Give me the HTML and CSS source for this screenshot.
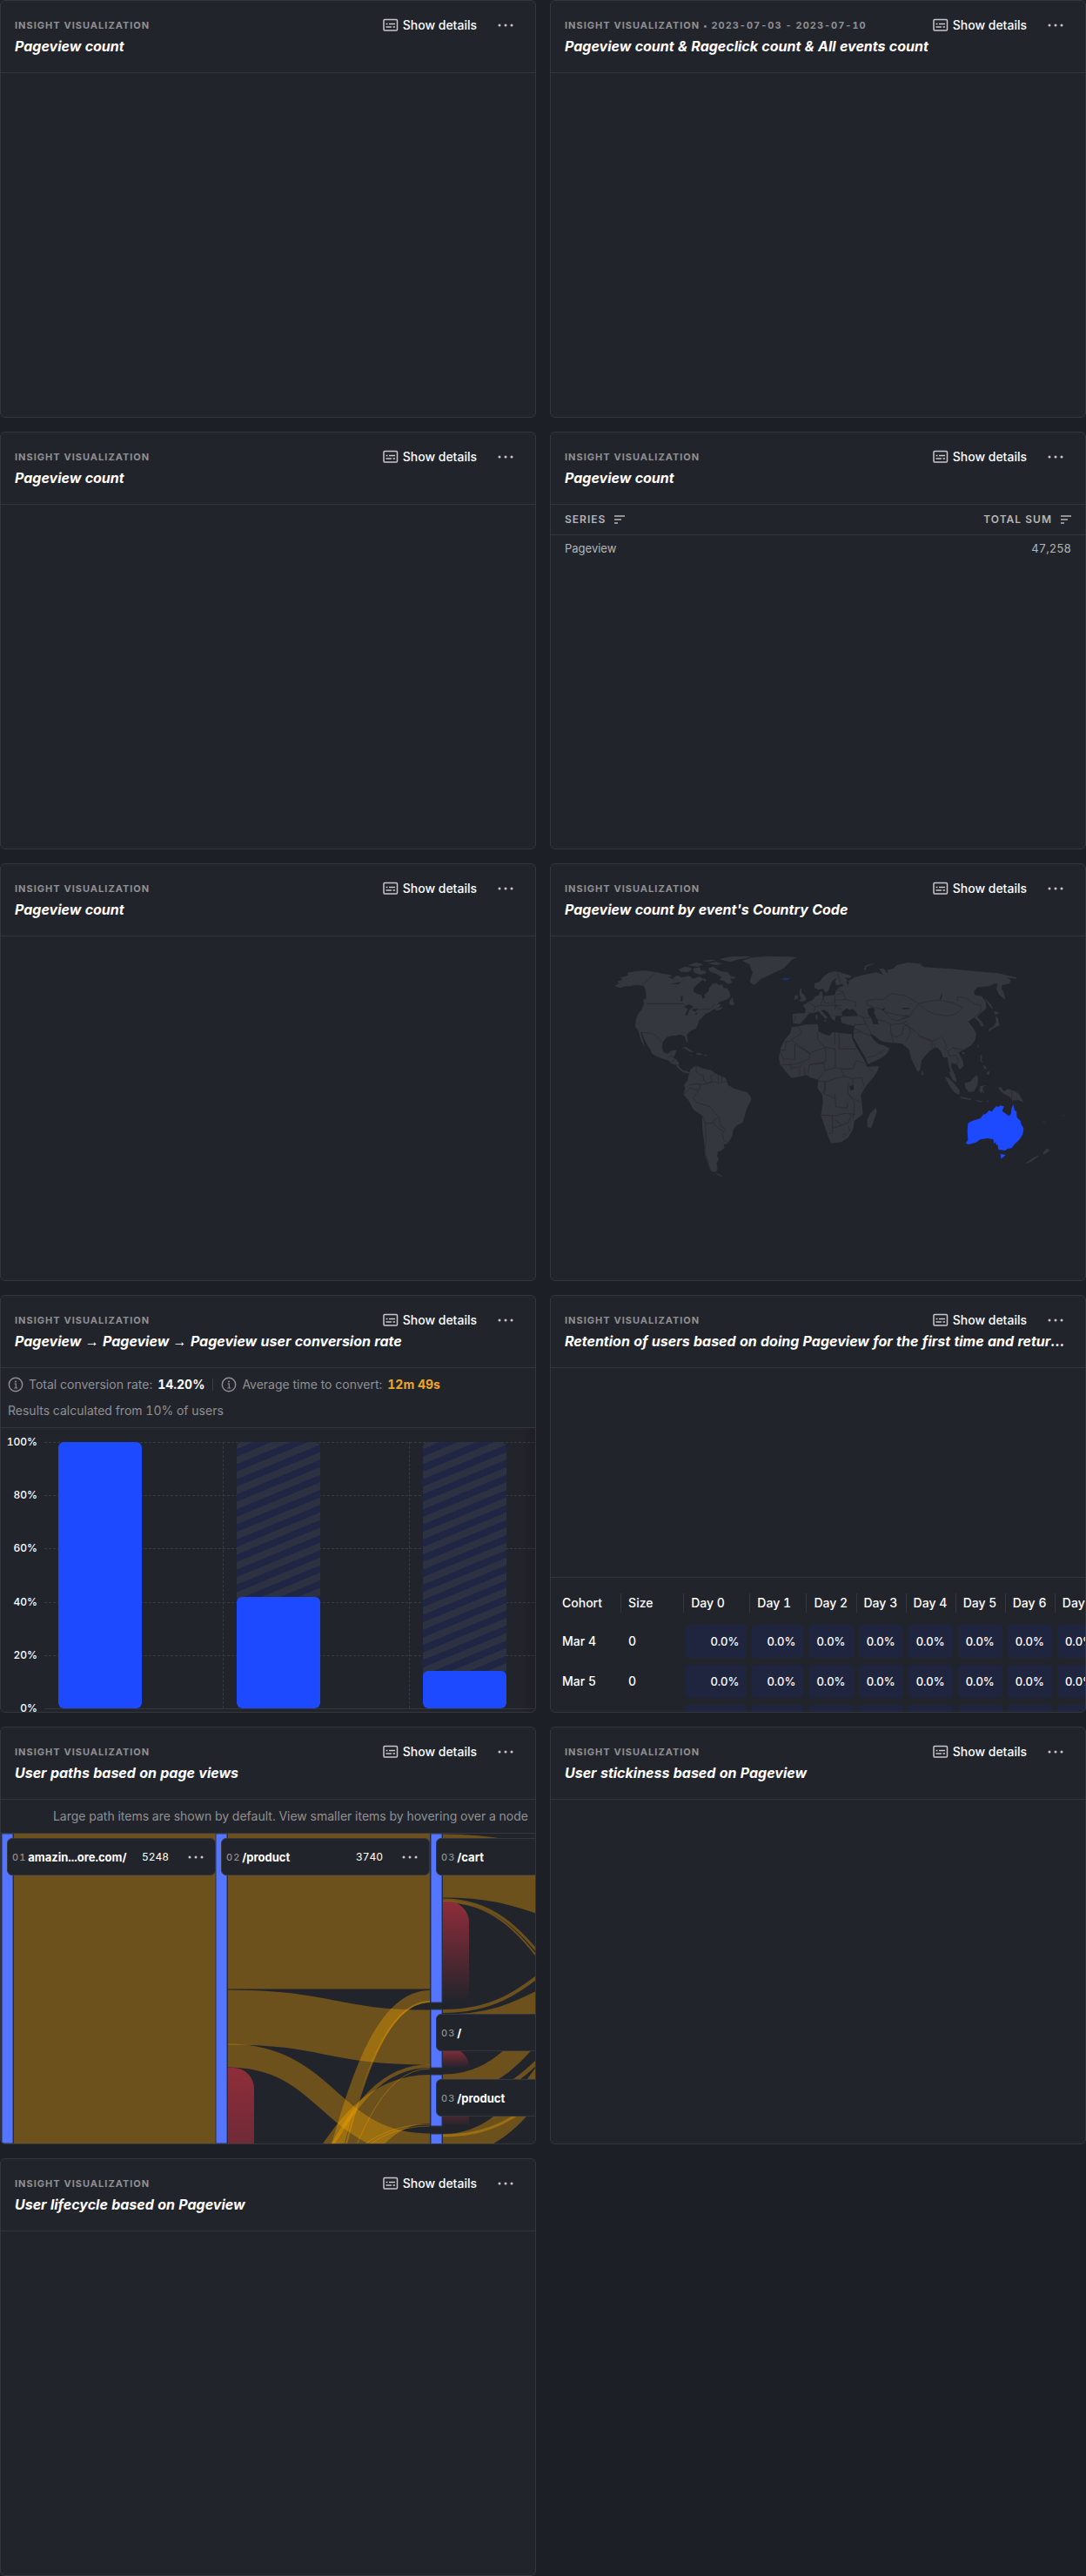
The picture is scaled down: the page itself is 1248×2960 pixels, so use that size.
FILE: index.html
```html
<!DOCTYPE html>
<html lang="en">
<head>
<meta charset="utf-8">
<meta name="viewport" content="width=device-width, initial-scale=1">
<title>Insight cards</title>
<link rel="stylesheet" href="styles.css">
</head>
<body>
<svg class="defs" aria-hidden="true">
  <symbol id="icon-details" viewBox="0 0 18 16"><rect x="1" y="1.5" width="15.5" height="12.5" rx="1" fill="none" stroke="currentColor" stroke-width="1.5"/><path d="M3.5 6.5h2M7 6.5h7M3.5 10h6.500M11.500 10h2.500" stroke="currentColor" stroke-width="1.500"/></symbol>
  <symbol id="icon-more" viewBox="0 0 18 4"><circle cx="2" cy="2" r="1.500" fill="currentColor"/><circle cx="9" cy="2" r="1.500" fill="currentColor"/><circle cx="16" cy="2" r="1.500" fill="currentColor"/></symbol>
  <symbol id="icon-sort" viewBox="0 0 12 10"><path d="M0 1h12M0 5h8M0 9h4" stroke="currentColor" stroke-width="1.500"/></symbol>
  <symbol id="icon-info" viewBox="0 0 18 18"><circle cx="9" cy="9" r="7.700" fill="none" stroke="currentColor" stroke-width="1.400"/><path d="M7.500 8h1.800v5M7.200 13h4" fill="none" stroke="currentColor" stroke-width="1.200"/><circle cx="9" cy="5.500" r="1" fill="currentColor"/></symbol>
</svg>
<main class="grid">

<article class="card">
  <header class="head"><div class="top"><h5 class="kind">Insight visualization</h5><button class="details"><svg><use href="#icon-details"/></svg>Show details</button><button class="more" aria-label="More"><svg><use href="#icon-more"/></svg></button></div><h4 class="title">Pageview count</h4></header>
</article>

<article class="card">
  <header class="head"><div class="top"><h5 class="kind">Insight visualization <span class="dot">•</span> 2023-07-03 - 2023-07-10</h5><button class="details"><svg><use href="#icon-details"/></svg>Show details</button><button class="more" aria-label="More"><svg><use href="#icon-more"/></svg></button></div><h4 class="title">Pageview count &amp; Rageclick count &amp; All events count</h4></header>
</article>

<article class="card">
  <header class="head"><div class="top"><h5 class="kind">Insight visualization</h5><button class="details"><svg><use href="#icon-details"/></svg>Show details</button><button class="more" aria-label="More"><svg><use href="#icon-more"/></svg></button></div><h4 class="title">Pageview count</h4></header>
</article>

<article class="card">
  <header class="head"><div class="top"><h5 class="kind">Insight visualization</h5><button class="details"><svg><use href="#icon-details"/></svg>Show details</button><button class="more" aria-label="More"><svg><use href="#icon-more"/></svg></button></div><h4 class="title">Pageview count</h4></header>
  <table class="series">
    <thead><tr><th>Series<svg><use href="#icon-sort"/></svg></th><th>Total sum<svg><use href="#icon-sort"/></svg></th></tr></thead>
    <tbody><tr><td>Pageview</td><td>47,258</td></tr></tbody>
  </table>
</article>

<article class="card">
  <header class="head"><div class="top"><h5 class="kind">Insight visualization</h5><button class="details"><svg><use href="#icon-details"/></svg>Show details</button><button class="more" aria-label="More"><svg><use href="#icon-more"/></svg></button></div><h4 class="title">Pageview count</h4></header>
</article>

<article class="card">
  <header class="head"><div class="top"><h5 class="kind">Insight visualization</h5><button class="details"><svg><use href="#icon-details"/></svg>Show details</button><button class="more" aria-label="More"><svg><use href="#icon-more"/></svg></button></div><h4 class="title">Pageview count by event's Country Code</h4></header>
  <svg class="map" viewBox="-141 -12 1842 1185" role="img" aria-label="World map">
    <g class="land">
      <path d="M78 158L95 150 88 144 108 136 98 131 125 122 122 114 150 108 185 106 222 111 250 118 270 120 280 128 295 122 310 130 335 124 350 134 372 126 385 136 370 148 352 165 350 178 362 186 378 190 382 205 390 198 388 188 402 178 405 165 415 152 428 148 440 156 450 154 455 166 468 168 474 178 478 192 470 203 445 212 432 222 445 222 440 232 420 240 405 250 392 255 380 268 370 278 366 292 360 305 345 312 333 320 328 328 332 354 326 350 320 332 305 326 290 330 275 330 258 336 246 350 242 370 248 388 262 393 275 382 292 380 288 395 280 405 292 412 300 424 302 438 315 450 330 452 338 460 328 460 315 457 300 445 290 432 275 425 262 415 245 410 225 402 208 392 202 378 190 360 180 340 172 318 168 318 178 350 182 368 172 352 165 330 160 312 150 300 152 275 160 255 172 240 180 222 178 208 188 200 186 175 180 160 165 156 150 155 135 160 115 160 98 166Z"/>
      <path d="M298 103L320 92 340 95 345 103 330 112 310 110ZM350 98L372 94 376 104 395 108 392 116 372 120 352 112ZM400 98L418 92 430 100 445 108 470 112 480 125 498 128 488 135 478 132 484 148 470 152 456 142 440 138 448 128 430 118 410 110ZM330 88L360 78 385 84 366 92ZM400 80L430 76 450 82 430 88ZM440 66L480 58 550 56 530 64 500 68 480 76 460 72ZM380 72L410 68 430 70 400 76ZM382 132L398 138 388 144ZM475 210L486 198 488 212 492 220 488 226 474 222ZM425 238L440 234 452 230 446 240 430 244Z"/>
      <path d="M520 72L545 62 600 56 680 58 708 60 690 68 675 85 660 100 640 108 620 118 598 128 582 135 565 152 555 154 545 145 550 125 555 112 548 98 545 85 530 78Z"/>
      <path d="M308 372L325 370 345 382 352 386 340 386 322 375ZM358 390L372 390 384 396 366 397ZM388 397L398 397 398 400 388 400ZM338 396L348 397 340 399Z"/>
      <path d="M340 448L355 436 365 436 385 444 410 448 430 462 450 472 462 476 470 500 490 512 515 520 535 525 548 540 550 552 535 580 528 605 520 630 500 640 488 655 485 675 475 692 468 702 455 705 458 715 448 726 435 730 432 745 438 755 430 770 434 790 428 800 410 798 400 770 390 740 388 700 382 660 380 605 350 585 335 555 316 532 322 512 318 500 330 485 335 465ZM425 802L438 807 454 817 440 814Z"/>
      <path d="M690 300L712 298 740 292 778 290 782 302 780 314 800 325 820 330 830 318 855 320 880 324 895 324 900 345 915 375 938 412 950 438 990 435 985 452 970 475 945 505 928 535 935 600 905 625 902 650 885 680 860 697 825 701 812 670 790 605 797 560 795 535 778 510 782 482 755 475 740 466 715 472 690 476 670 455 650 430 645 408 650 375 665 345 685 320Z"/>
      <path d="M980 578L983 592 964 648 950 645 950 620 960 598Z"/>
      <path d="M692 255L735 252 738 240 728 226 745 215 765 205 770 195 784 190 786 178 796 180 796 194 815 192 838 190 842 176 850 164 870 158 862 152 843 157 838 142 846 130 830 140 822 158 816 176 806 182 796 168 780 172 768 166 768 150 785 145 800 125 815 115 835 109 850 110 875 118 896 124 890 132 872 130 885 142 905 130 930 122 950 118 980 112 1005 120 990 98 1008 100 1022 118 1018 104 1040 98 1050 88 1090 78 1130 82 1145 94 1170 95 1240 100 1320 108 1400 115 1440 124 1466 130 1462 134 1430 130 1445 138 1440 150 1415 156 1412 168 1422 185 1426 206 1405 190 1395 170 1400 152 1390 150 1370 160 1330 163 1318 176 1320 190 1345 194 1358 212 1360 236 1345 250 1328 266 1345 282 1352 298 1342 298 1335 282 1318 268 1298 282 1316 304 1326 325 1322 345 1308 364 1280 380 1265 388 1278 412 1282 435 1268 448 1262 432 1250 428 1240 422 1240 440 1252 465 1258 490 1250 485 1236 450 1230 430 1226 405 1212 406 1204 384 1190 370 1172 378 1150 398 1138 415 1132 448 1124 456 1114 436 1102 410 1094 378 1070 358 1040 355 1005 352 990 346 970 330 960 325 972 344 990 360 1005 362 1028 374 1015 395 990 412 952 428 945 408 925 375 902 335 905 296 880 292 862 286 858 268 870 262 842 262 838 280 828 272 815 250 800 240 792 244 812 266 808 274 792 258 782 246 765 252 748 254 738 268 718 290 694 288Z"/>
      <path d="M718 170L724 168 722 180 734 192 740 206 730 212 714 210 722 202 716 190ZM700 192L712 190 710 204 698 206ZM772 258L778 258 778 276 773 274ZM800 276L808 276 806 284ZM937 102L945 88 975 80 970 84 948 92 944 104Z"/>
      <path d="M1355 200L1375 222 1385 240 1378 236 1362 214ZM1386 246L1400 248 1404 254 1390 258ZM1392 264L1400 268 1406 295 1386 304 1370 316 1368 308 1385 298 1394 284ZM1330 360L1334 362 1333 374 1330 370ZM1275 388L1286 388 1282 396ZM1340 396L1346 400 1344 416 1352 424 1340 418ZM1362 455L1370 452 1372 464 1362 464ZM1350 432L1358 436 1362 446 1352 444ZM1138 450L1145 462 1140 468 1136 460ZM1216 470L1232 478 1252 498 1268 518 1268 534 1250 526 1232 500ZM1230 452L1246 462 1258 482 1256 490 1244 482ZM1268 540L1290 544 1312 548 1306 552 1275 547ZM1286 494L1305 488 1325 466 1332 474 1330 500 1318 522 1300 524 1288 510ZM1340 504L1365 500 1350 506 1348 514 1354 532 1346 522 1342 530 1336 520ZM1400 508L1412 508 1420 522 1435 514 1455 520 1472 530 1482 548 1490 560 1470 552 1450 554 1440 540 1420 530 1408 520ZM1320 552L1350 556 1340 560ZM1360 556L1372 552 1362 560ZM1497 768L1520 752 1542 742 1536 750 1515 764 1500 771ZM1556 735L1566 720 1580 722 1572 732 1558 740ZM1553 622L1564 630 1562 632ZM1624 604L1630 604 1626 608Z"/>
    </g>
    <g class="water">
      <path d="M862 250L878 236 890 242 900 238 912 250 918 262 880 264 864 262ZM950 240L965 232 978 240 972 250 985 275 988 290 970 290 964 270 954 258ZM1001 238L1014 234 1006 244ZM1070 234L1095 234 1094 238 1072 239ZM1200 205L1206 184 1208 194 1203 206ZM888 505L902 500 904 515 893 520ZM262 128L290 124 280 134ZM265 154L308 145 300 152ZM308 192L314 196 312 212 306 210ZM318 230L335 222 352 232 340 236 328 262 322 258 332 238ZM342 240L366 236 358 248ZM350 258L366 250 362 256ZM960 325L975 345 1005 352 992 346 975 330ZM878 140L888 146 882 155Z"/>
    </g>
    <g class="borders">
      <path d="M222 111L172 160 186 178M188 220H315L325 226M366 240L410 238 425 222M172 318L205 322 222 330 235 346 242 352M262 405L276 398 280 405M275 420L290 412M290 432L302 430M360 438V455L372 465 385 466 385 480 395 494M335 500L370 495 375 510 350 545 360 560 378 565M318 530L340 510 365 518M395 494L415 488 410 470 425 462M420 488L440 494 465 488M436 470V490M448 472V490M370 500L400 495 420 488M378 565L408 575 420 590 440 612 420 622 415 632 392 632 380 605M392 632L394 690 390 730 405 780 412 798M440 614L442 638 462 655 450 668 455 690 470 700M418 632L435 648 455 660M712 300L725 320 688 345 752 390 805 370 780 345 778 318M665 350H685M700 360V412L660 410 648 380H668L670 350M700 360L752 392 750 410 705 428 680 430M805 370L808 420 750 430 745 462M655 430H685L690 450M716 445V470M734 440V470M690 440L715 440 730 425M752 430L800 425 805 450 780 480M805 450L840 440M838 318V360M853 320V376H912M840 376V440L860 445 900 445 910 420M840 376L805 370M908 415L938 425 970 455M860 445L870 470 840 478 805 490 800 530 838 545M870 470L900 478 930 475 940 505M885 490L882 530 900 545 925 560M900 478V500M838 530L842 575 880 580 882 560M792 604L845 606M830 606V665L818 668M840 620L860 640 830 650M845 606L870 598 895 600M860 640L885 630 895 600M885 530L905 560V585L900 615M782 488H805V520L795 528M864 672L872 668 876 674 870 680 864 676M895 600L908 602M885 640L890 660"/>
      <path d="M702 262L698 284M745 250L768 255M748 215L770 230 765 250M770 230L795 225 810 228M796 195L805 218 830 220 838 212V192M810 228L840 225 838 240M800 195L790 222M842 190L868 182 875 205 838 208M875 205L912 215 908 232M838 208L842 232 862 240M840 226L860 226M846 112L858 150M858 160L845 172 868 180M858 270L838 262M908 290L905 305 930 318 965 332M935 268L945 290 930 292 905 292M945 290L958 310 965 328M918 260L945 270 962 266M1008 202L1035 185 1080 192 1128 220 1110 240 1100 260 1070 262 1040 255 1015 250 1000 240 950 225 946 210 975 204 1008 205M1128 220L1160 212 1200 208 1245 216 1280 234 1252 258 1222 262 1180 256 1150 240ZM1260 210L1262 196 1290 200 1320 222 1342 225 1340 250 1320 266M984 275L1010 280 1030 292 1072 288 1085 280M1010 250L1030 270 1050 280 1072 272 1098 264M1030 292L1032 325 1050 335 1070 325 1075 300 1090 290M1032 325L1040 352M1072 288L1095 300 1100 320 1082 350M1095 300L1120 320 1140 335 1168 345 1175 350 1205 335 1215 348 1225 370M1125 330L1170 350M1172 350V372L1185 375 1180 355M1215 370L1228 385 1245 372 1262 375 1280 380M1228 385L1232 400 1256 398 1265 420M1250 428L1265 425M1245 372L1268 392 1275 415M950 405L975 400 992 390 1012 375M1448 517V552M905 322L930 315M1070 272L1090 265 1075 262"/>
    </g>
    <path class="iceland" d="M658 132L672 132 685 130 680 136 668 140 658 137Z"/>
    <path class="country-top" d="M1297 632L1310 625 1340 615 1350 602 1358 600 1370 588 1380 592 1384 584 1395 573 1402 576 1408 571 1421 574 1415 590 1438 607 1445 600 1448 580 1453 567 1458 588 1464 590 1466 612 1478 624 1480 634 1489 650 1486 670 1475 688 1458 704 1447 718 1434 720 1425 726 1402 723 1400 708 1392 704 1396 696 1386 702 1385 688 1365 684 1340 688 1325 698 1300 705 1289 701 1297 690 1295 660ZM1409 738L1427 741 1418 750 1411 754Z"/>
  </svg>
</article>

<article class="card">
  <header class="head"><div class="top"><h5 class="kind">Insight visualization</h5><button class="details"><svg><use href="#icon-details"/></svg>Show details</button><button class="more" aria-label="More"><svg><use href="#icon-more"/></svg></button></div><h4 class="title">Pageview <span class="arrow">→</span> Pageview <span class="arrow">→</span> Pageview user conversion rate</h4></header>
  <div class="summary">
    <div class="stats"><span class="stat"><svg><use href="#icon-info"/></svg>Total conversion rate: <b>14.20%</b></span><span class="stat"><svg><use href="#icon-info"/></svg>Average time to convert: <b class="amber">12m 49s</b></span></div>
    <div>Results calculated from 10% of users</div>
  </div>
  <div class="funnel">
    <div class="axis"><span>100%</span><span>80%</span><span>60%</span><span>40%</span><span>20%</span><span>0%</span></div>
    <div class="plot">
      <div class="lines"><i></i><i></i><i></i><i></i><i></i></div>
      <div class="step"><div class="bar"><div class="fill" style="height:100%"></div></div></div>
      <div class="step"><div class="bar"><div class="fill" style="height:41.8%"></div></div></div>
      <div class="step"><div class="bar"><div class="fill" style="height:14.2%"></div></div></div>
    </div>
  </div>
</article>

<article class="card">
  <header class="head"><div class="top"><h5 class="kind">Insight visualization</h5><button class="details"><svg><use href="#icon-details"/></svg>Show details</button><button class="more" aria-label="More"><svg><use href="#icon-more"/></svg></button></div><h4 class="title">Retention of users based on doing Pageview for the first time and returning with the same event</h4></header>
  <div class="graph"></div>
  <div class="cohorts">
    <table class="retention">
      <colgroup><col class="c-label"><col class="c-size"><col class="c-day0"><col class="c-day1"><col><col><col><col><col><col></colgroup>
      <thead><tr><th><span>Cohort</span></th><th><span>Size</span></th><th><span>Day 0</span></th><th><span>Day 1</span></th><th><span>Day 2</span></th><th><span>Day 3</span></th><th><span>Day 4</span></th><th><span>Day 5</span></th><th><span>Day 6</span></th><th><span>Day 7</span></th></tr></thead>
      <tbody>
        <tr><td>Mar 4</td><td>0</td><td><div>0.0%</div></td><td><div>0.0%</div></td><td><div>0.0%</div></td><td><div>0.0%</div></td><td><div>0.0%</div></td><td><div>0.0%</div></td><td><div>0.0%</div></td><td><div>0.0%</div></td></tr>
        <tr><td>Mar 5</td><td>0</td><td><div>0.0%</div></td><td><div>0.0%</div></td><td><div>0.0%</div></td><td><div>0.0%</div></td><td><div>0.0%</div></td><td><div>0.0%</div></td><td><div>0.0%</div></td><td><div>0.0%</div></td></tr>
        <tr><td></td><td></td><td><div></div></td><td><div></div></td><td><div></div></td><td><div></div></td><td><div></div></td><td><div></div></td><td><div></div></td><td><div></div></td></tr>
      </tbody>
    </table>
  </div>
</article>

<article class="card">
  <header class="head"><div class="top"><h5 class="kind">Insight visualization</h5><button class="details"><svg><use href="#icon-details"/></svg>Show details</button><button class="more" aria-label="More"><svg><use href="#icon-more"/></svg></button></div><h4 class="title">User paths based on page views</h4></header>
  <p class="hint">Large path items are shown by default. View smaller items by hovering over a node</p>
  <div class="paths">
    <svg class="sankey" width="740" height="356" viewBox="0 0 740 356">
      <defs><linearGradient id="drop" x1="0" y1="0" x2="0" y2="1"><stop offset="0" stop-color="#8f2d3a"/><stop offset="1" stop-color="#8f2d3a" stop-opacity="0"/></linearGradient></defs>
      <g class="links">
        <path d="M15 178H247" stroke-width="356"/>
        <path d="M261 89H493" stroke-width="179"/>
        <path d="M261 211C377 211 377 234 493 234" stroke-width="63"/>
        <path d="M261 255C377 255 377 358 493 358" stroke-width="27"/>
        <path d="M261 598C377 598 377 187 493 187" stroke-width="14"/>
        <path d="M261 683C377 683 377 193 493 193" stroke-width="2"/>
        <path d="M261 462C377 462 377 267 493 267" stroke-width="4"/>
        <path d="M261 625C377 625 377 270 493 270" stroke-width="1"/>
        <path d="M261 489C377 489 377 305 493 305" stroke-width="56"/>
        <path d="M261 455C377 455 377 334 493 334" stroke-width="1"/>
        <path d="M261 470C377 470 377 336 493 336" stroke-width="1"/>
        <path d="M508 37C624 37 624 75 740 75" stroke-width="73"/>
        <path d="M508 76C624 76 624 212 740 212" stroke-width="3"/>
        <path d="M508 78C624 78 624 224 740 224" stroke-width="2"/>
        <path d="M508 204C624 204 624 113 740 113" stroke-width="4"/>
        <path d="M508 228C624 228 624 171 740 171" stroke-width="41"/>
        <path d="M508 288C624 288 624 138 740 138" stroke-width="23"/>
        <path d="M508 310C624 310 624 200 740 200" stroke-width="5"/>
        <path d="M508 358C624 358 624 198 740 198" stroke-width="26"/>
        <path d="M508 347C624 347 624 252 740 252" stroke-width="3"/>
      </g>
      <g fill="url(#drop)">
        <path d="M261 269h6a24 24 0 0 1 24 24v270h-30z"/>
        <path d="M508 78h6a24 24 0 0 1 24 24v92h-30z"/>
        <path d="M508 247h10a20 22 0 0 1 20 22h-30z"/>
        <path d="M508 303h6a24 24 0 0 1 24 24v9h-30z"/>
      </g>
      <g class="nodes"><path d="M1 0h13v356h-13zM247 0h13v356h-13zM494 0h13v194h-13zM494 202h13v67h-13zM494 277h13v59h-13zM494 345h13v20h-13z"/></g>
    </svg>
    <div class="node n1"><small>01</small><b>amazin...ore.com/</b><span>5248</span><button class="more" aria-label="More"><svg><use href="#icon-more"/></svg></button></div>
    <div class="node n2"><small>02</small><b>/product</b><span>3740</span><button class="more" aria-label="More"><svg><use href="#icon-more"/></svg></button></div>
    <div class="node n3"><small>03</small><b>/cart</b></div>
    <div class="node n4"><small>03</small><b>/</b></div>
    <div class="node n5"><small>03</small><b>/product</b></div>
  </div>
</article>

<article class="card">
  <header class="head"><div class="top"><h5 class="kind">Insight visualization</h5><button class="details"><svg><use href="#icon-details"/></svg>Show details</button><button class="more" aria-label="More"><svg><use href="#icon-more"/></svg></button></div><h4 class="title">User stickiness based on Pageview</h4></header>
</article>

<article class="card">
  <header class="head"><div class="top"><h5 class="kind">Insight visualization</h5><button class="details"><svg><use href="#icon-details"/></svg>Show details</button><button class="more" aria-label="More"><svg><use href="#icon-more"/></svg></button></div><h4 class="title">User lifecycle based on Pageview</h4></header>
</article>

</main>
</body>
</html>
```
FILE: styles.css
```css
* { box-sizing: border-box; }
body { margin: 0; background: #1d1f27; color: #fff; font: 14px/20px Inter, "Liberation Sans", sans-serif; font-variant-numeric: tabular-nums; }
h4, h5, p { margin: 0; }
button { background: none; border: 0; padding: 0; margin: 0; color: inherit; font: inherit; cursor: pointer; }
.defs { display: none; }

.grid { display: grid; grid-template-columns: repeat(auto-fit, minmax(560px, 1fr)); grid-auto-rows: 480px; gap: 16px; }
.card { display: flex; flex-direction: column; min-width: 0; overflow: hidden; background: #22242b; border: 1px solid #35373e; border-radius: 6px; }

.head { flex: none; height: 83px; padding: 16px; border-bottom: 1px solid #35373e; }
.top { display: flex; align-items: center; height: 24px; }
.kind { flex: 1; color: #8f9094; font-size: 11px; line-height: 16px; font-weight: 700; letter-spacing: 1px; text-transform: uppercase; }
.kind .dot { font-size: 9px; }
.details { display: flex; align-items: center; gap: 5px; font-weight: 500; }
.details svg { width: 18px; height: 16px; color: #c8c8ca; }
.more { display: flex; align-items: center; justify-content: center; width: 34px; height: 24px; margin: 0 1px 0 16px; color: #c8c8ca; }
.more svg { width: 18px; height: 4px; }
.title { font-size: 16px; line-height: 24px; font-weight: 650; font-style: italic; white-space: nowrap; overflow: hidden; text-overflow: ellipsis; }
.title .arrow { font-family: "Liberation Sans", sans-serif; font-style: normal; font-weight: 400; }

.series { width: 100%; border-collapse: collapse; font-size: 13px; color: #b5b6b8; }
.series th { height: 34px; padding: 0 16px; border-bottom: 1px solid #35373e; font-size: 12px; font-weight: 600; letter-spacing: 1px; text-align: left; text-transform: uppercase; }
.series td { height: 31px; padding: 0 16px; }
.series th:last-child, .series td:last-child { text-align: right; }
.series th svg { width: 12px; height: 10px; margin-left: 10px; vertical-align: -1px; }

.map { flex: 1; width: 100%; min-height: 0; }
.land { fill: #35373f; }
.water { fill: #22242b; }
.borders { fill: none; stroke: #25272e; stroke-width: 2; }
.iceland { fill: #1f2f70; }
.country-top { fill: #1d4aff; }

.summary { flex: none; height: 69px; padding: 4px 8px; border-bottom: 1px solid #35373e; color: #8f9094; line-height: 30px; }
.stats { display: flex; }
.stat { display: flex; align-items: center; gap: 6px; }
.stat svg { width: 18px; height: 18px; }
.stat b { font-weight: 700; color: #fff; }
.stat b.amber { color: #eea32b; }
.stat + .stat::before { content: ""; flex: none; width: 1px; height: 14px; margin: 0 3px 0 9px; background: #3b3d44; }

.funnel { flex: 1; position: relative; display: flex; padding-top: 16px; min-height: 0; overflow: hidden; }
.funnel::after { content: ""; position: absolute; top: 0; right: 0; bottom: 0; width: 16px; background: linear-gradient(to left, rgba(0, 0, 0, .14), transparent); }
.axis { flex: none; width: 50px; height: 306px; display: flex; flex-direction: column; justify-content: space-between; text-align: right; padding-right: 8px; font-size: 12px; font-weight: 500; }
.axis span { height: 0; line-height: 0; }
.plot { position: relative; flex: 1; height: 307px; display: flex; border-bottom: 1px solid #35373e; }
.lines { position: absolute; inset: 0; display: flex; flex-direction: column; }
.lines i { flex: 1; border-top: 1px dashed #393b43; }
.step { position: relative; flex: none; width: 214px; padding-left: 15px; border-left: 1px dashed #393b43; }
.step:nth-child(2) { width: 205px; padding-left: 16px; border-left: 0; }
.bar { width: 96px; height: 100%; display: flex; align-items: flex-end; border-radius: 6px; overflow: hidden; background: repeating-linear-gradient(-22.5deg, rgba(31, 38, 69, .9) 0 8px, rgba(46, 51, 69, .9) 8px 16px); }
.fill { width: 100%; background: #1d4aff; border-radius: 6px; }

.graph { flex: 0 0 241px; border-bottom: 1px solid #35373e; }
.cohorts { flex: 1; padding: 8px 0 0 4px; overflow: hidden; }
.retention { table-layout: fixed; width: 632px; border-collapse: collapse; font-weight: 500; }
.retention col { width: 57px; }
.retention .c-label { width: 76px; }
.retention .c-size { width: 72px; }
.retention .c-day0 { width: 76px; }
.retention .c-day1 { width: 65px; }
.retention th { height: 42px; padding: 0; font-weight: 500; text-align: left; white-space: nowrap; }
.retention th span { display: block; padding-left: 8px; line-height: 22px; border-left: 1px solid #35373e; }
.retention th:first-child span { border-left-color: transparent; }
.retention td { height: 46px; padding: 0 3px; }
.retention td:nth-child(-n+2) { padding-left: 9px; }
.retention td div { height: 38px; padding-right: 9px; font-size: 13px; line-height: 38px; text-align: right; background: #20253f; border-radius: 4px; font-variant-numeric: normal; }

.hint { flex: none; height: 39px; padding: 0 8px; border-bottom: 1px solid #35373e; color: #8f9094; line-height: 38px; text-align: right; white-space: nowrap; }
.paths { flex: 1; position: relative; overflow: hidden; }
.sankey { display: block; }
.links { fill: none; stroke: #f7a501; stroke-opacity: .35; }
.nodes { fill: #5375ff; stroke: #30354a; stroke-width: 1; }
.node { position: absolute; display: flex; align-items: center; width: 240px; height: 43px; padding: 0 0 0 5px; background: #22242b; border: 1px solid #35373e; border-radius: 6px; font-size: 12px; }
.node small { margin-right: 2px; color: #8f9094; font-size: 11px; font-weight: 500; letter-spacing: 1px; }
.node b { flex: 1; font-size: 13px; font-weight: 700; }
.node .more { margin: 0 5px 0 14px; }
.n1 { left: 7px; top: 5px; }
.n2 { left: 253px; top: 5px; }
.n3 { left: 500px; top: 5px; }
.n4 { left: 500px; top: 207px; }
.n5 { left: 500px; top: 282px; }
```
